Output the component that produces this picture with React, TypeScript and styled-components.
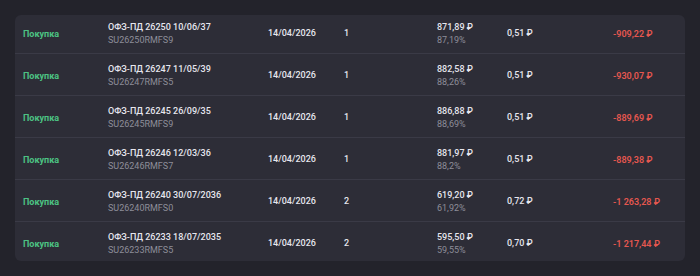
import React, { ReactElement } from 'react';
import styled, { createGlobalStyle } from 'styled-components';

interface Deal {
  name: string;
  code: string;
  date: string;
  qty: number;
  price: string;
  percent: string;
  fee: string;
  total: string;
}

const DEALS: Deal[] = [
  { name: 'ОФЗ-ПД 26250 10/06/37', code: 'SU26250RMFS9', date: '14/04/2026', qty: 1, price: '871,89 ₽', percent: '87,19%', fee: '0,51 ₽', total: '-909,22 ₽' },
  { name: 'ОФЗ-ПД 26247 11/05/39', code: 'SU26247RMFS5', date: '14/04/2026', qty: 1, price: '882,58 ₽', percent: '88,26%', fee: '0,51 ₽', total: '-930,07 ₽' },
  { name: 'ОФЗ-ПД 26245 26/09/35', code: 'SU26245RMFS9', date: '14/04/2026', qty: 1, price: '886,88 ₽', percent: '88,69%', fee: '0,51 ₽', total: '-889,69 ₽' },
  { name: 'ОФЗ-ПД 26246 12/03/36', code: 'SU26246RMFS7', date: '14/04/2026', qty: 1, price: '881,97 ₽', percent: '88,2%', fee: '0,51 ₽', total: '-889,38 ₽' },
  { name: 'ОФЗ-ПД 26240 30/07/2036', code: 'SU26240RMFS0', date: '14/04/2026', qty: 2, price: '619,20 ₽', percent: '61,92%', fee: '0,72 ₽', total: '-1 263,28 ₽' },
  { name: 'ОФЗ-ПД 26233 18/07/2035', code: 'SU26233RMFS5', date: '14/04/2026', qty: 2, price: '595,50 ₽', percent: '59,55%', fee: '0,70 ₽', total: '-1 217,44 ₽' },
];

const GlobalStyle = createGlobalStyle`
  html, body {
    margin: 0;
    padding: 0;
    background: #23232b;
  }
  body {
    font-family: Roboto, 'Noto Sans', 'DejaVu Sans', sans-serif;
    -webkit-font-smoothing: antialiased;
  }
`;

function App(): ReactElement {
  return (
    <Page>
      <GlobalStyle />
      <Card>
        {DEALS.map((deal) => (
          <Row key={deal.code}>
            <Operation>Покупка</Operation>
            <Stack>
              <MainText>{deal.name}</MainText>
              <SubText>{deal.code}</SubText>
            </Stack>
            <MainText>{deal.date}</MainText>
            <MainText>{deal.qty}</MainText>
            <Stack>
              <MainText>{deal.price}</MainText>
              <SubText>{deal.percent}</SubText>
            </Stack>
            <MainText>{deal.fee}</MainText>
            <Total>{deal.total}</Total>
          </Row>
        ))}
      </Card>
    </Page>
  );
}

const Page = styled.div`
  width: 700px;
  height: 276px;
  box-sizing: border-box;
  padding: 15px;
`;

const Card = styled.div`
  width: 670px;
  height: 246px;
  background: #2d2d37;
  border-radius: 6px;
  overflow: hidden;
  display: flex;
  flex-direction: column;
`;

const Row = styled.div`
  display: grid;
  grid-template-columns: 85px 160px 76px 93px 70px 106px 1fr;
  align-items: center;
  box-sizing: border-box;
  height: 42px;
  flex-shrink: 0;
  padding: 3px 0 0 8px;
  border-bottom: 1px solid #3a3a46;

  &:first-child {
    height: 39px;
    padding-top: 0;
  }

  &:last-child {
    height: 39px;
    padding-top: 5px;
    border-bottom: none;
  }
`;

const Stack = styled.div`
  display: flex;
  flex-direction: column;
`;

const MainText = styled.span`
  font-size: 9px;
  font-weight: 500;
  line-height: 13.5px;
  color: #e6e6ee;
  white-space: nowrap;
`;

const SubText = styled.span`
  font-size: 9px;
  line-height: 13.5px;
  color: #8d8d99;
  white-space: nowrap;
`;

const Operation = styled.span`
  font-size: 9px;
  font-weight: 700;
  color: #4cc283;
`;

const Total = styled.span`
  font-size: 9px;
  font-weight: 600;
  color: #e5574f;
  white-space: nowrap;
`;

export default App;
